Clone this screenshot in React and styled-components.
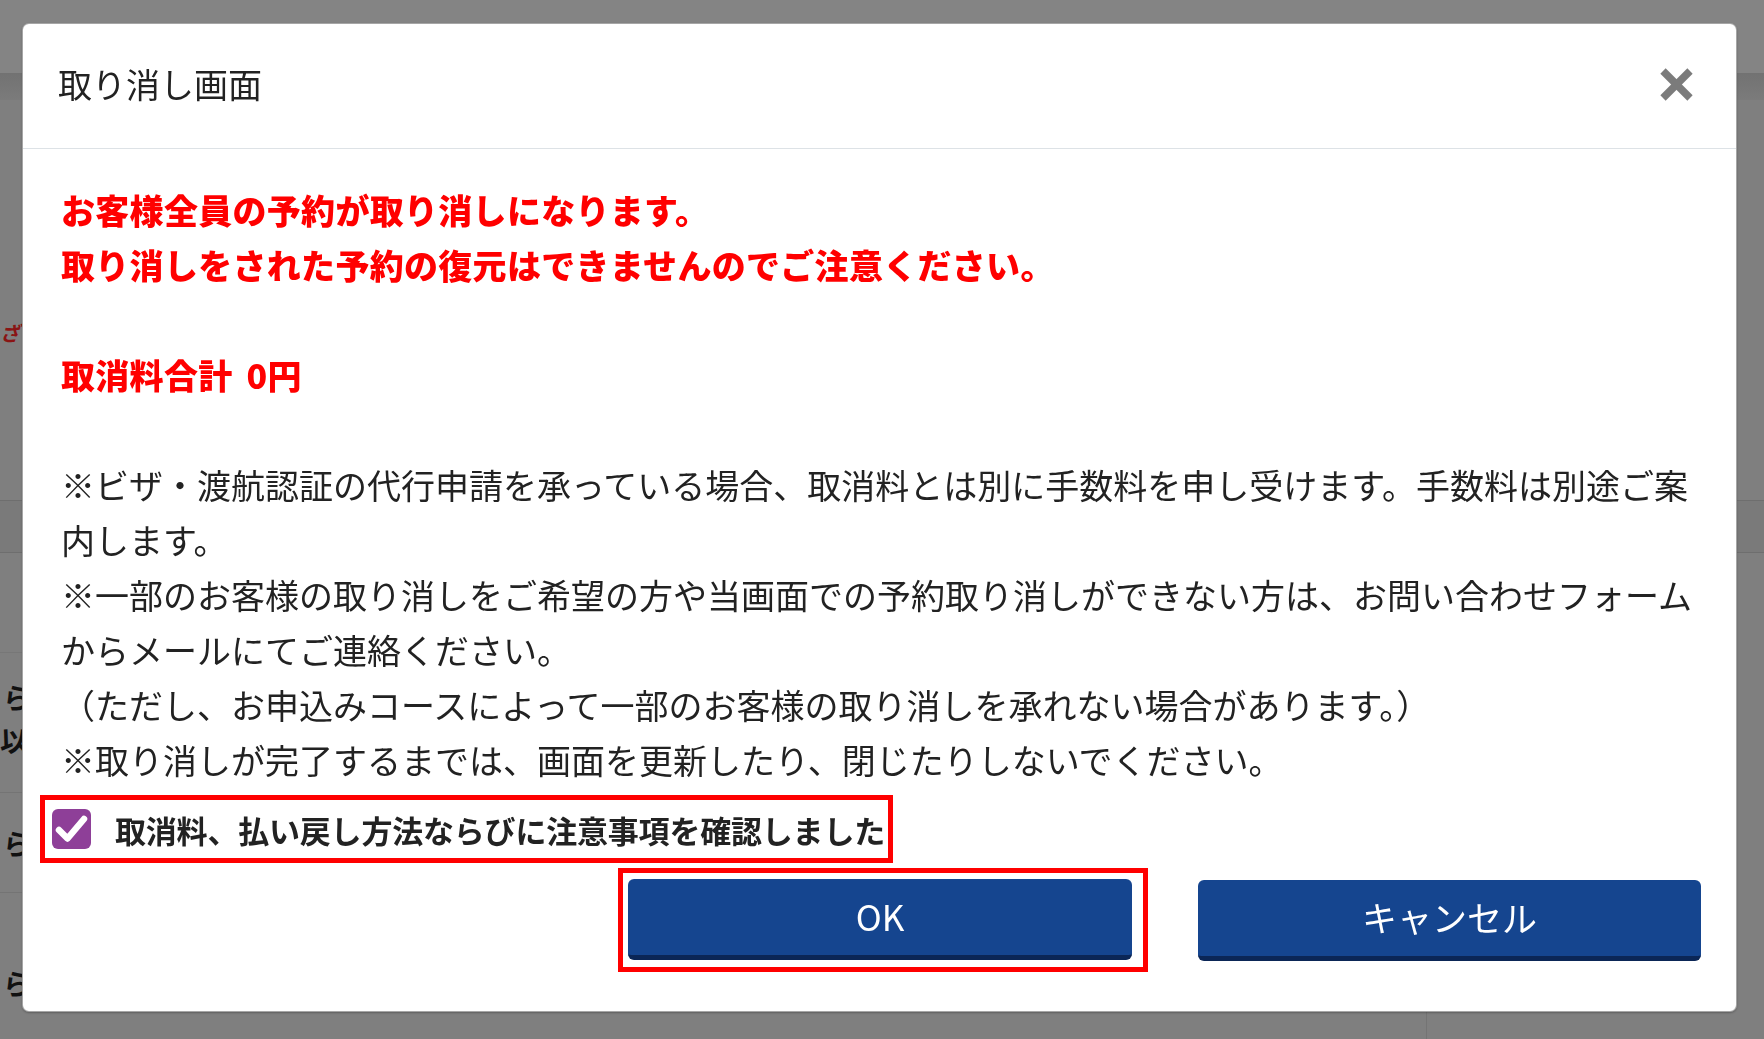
import React, { useState } from "react";
import styled, { createGlobalStyle } from "styled-components";

const FONT = `"Noto Sans CJK JP", "Noto Sans", sans-serif`;

const Global = createGlobalStyle`
  html, body { margin: 0; padding: 0; }
  body {
    background: #7f7f7f;
    font-family: ${FONT};
    overflow: hidden;
  }
  * { box-sizing: border-box; }
`;

/* ---------- dimmed page behind the dialog ---------- */
const Backdrop = styled.div`
  width: 1764px;
  height: 1039px;
  display: flex;
  flex-direction: column;
  background: #7f7f7f;
  overflow: hidden;
`;
const TopBar = styled.div`
  height: 73px;
  background: #848484;
`;
const NavBand = styled.div`
  height: 27px;
  background: linear-gradient(#727272, #7b7b7b);
`;
const Section = styled.div`
  height: ${(p) => p.$h}px;
  padding-top: ${(p) => p.$pt || 0}px;
  background: ${(p) => p.$bg || "transparent"};
  border-bottom: ${(p) => (p.$line ? `1px solid ${p.$line}` : "none")};
  border-top: ${(p) => (p.$topLine ? `1px solid ${p.$topLine}` : "none")};
  display: flex;
  flex-direction: column;
`;
const LowerGrid = styled.div`
  flex: 1;
  display: grid;
  grid-template-columns: 1426px 1fr;
`;
const LowerMain = styled.div`
  display: flex;
  flex-direction: column;
`;
const LowerSide = styled.div`
  border-left: 1px solid #747474;
`;
const Frag = styled.span`
  display: block;
  white-space: nowrap;
  font-size: ${(p) => p.$size}px;
  line-height: ${(p) => p.$lh}px;
  font-weight: 700;
  color: ${(p) => p.$color || "#111"};
  font-style: ${(p) => (p.$italic ? "italic" : "normal")};
  margin-left: ${(p) => p.$ml || 0}px;
`;

/* ---------- dialog ---------- */
const Modal = styled.div`
  position: fixed;
  top: 23px;
  left: 22px;
  width: 1715px;
  background: #fff;
  border: 1px solid rgba(0, 0, 0, 0.35);
  border-radius: 7px;
  box-shadow: 0 1px 2px rgba(0, 0, 0, 0.25);
  font-family: ${FONT};
  color: #222;
`;
const Header = styled.div`
  height: 125px;
  border-bottom: 1px solid #dde2e6;
  display: flex;
  align-items: center;
  justify-content: space-between;
  padding: 0 42px 0 35px;
`;
const Title = styled.h2`
  margin: -5px 0 0 0;
  font-size: 34px;
  font-weight: 400;
  line-height: 1;
  color: #222;
`;
const CloseButton = styled.button`
  width: 35px;
  height: 35px;
  padding: 0;
  border: 0;
  background: transparent;
  cursor: pointer;
  margin-top: -4px;
  display: flex;
  align-items: center;
  justify-content: center;
`;
const Body = styled.div`
  padding: 33px 38px 0 38px;
`;
const Notes = styled.div`
  font-size: 34px;
  line-height: 55px;
`;
const Alert = styled.p`
  margin: 0 0 55px 0;
  color: #ff0000;
  font-weight: 900;
  letter-spacing: 0.3px;
  word-spacing: 6px;
`;
const Plain = styled.p`
  margin: 0;
  color: #222;
  font-weight: 400;
`;
const CheckRow = styled.label`
  margin-top: 8px;
  margin-left: -21px;
  height: 68px;
  display: inline-flex;
  align-items: center;
  gap: 24px;
  padding: 0 3px 0 7px;
  border: 5px solid #ff0000;
  cursor: pointer;
`;
const Box = styled.span`
  width: 39px;
  height: 40px;
  border-radius: 6px;
  background: ${(p) => (p.$on ? "#8e3f98" : "#fff")};
  border: ${(p) => (p.$on ? "none" : "2px solid #999")};
  display: flex;
  align-items: center;
  justify-content: center;
  flex: none;
`;
const CheckLabel = styled.span`
  font-size: 31px;
  letter-spacing: -0.2px;
  font-weight: 700;
  color: #222;
  line-height: 1;
  white-space: nowrap;
`;
const Footer = styled.div`
  margin-top: 5px;
  padding: 0 35px 39px 0;
  display: flex;
  justify-content: flex-end;
  align-items: center;
  gap: 50px;
`;
const Highlight = styled.div`
  border: 5px solid #ff0000;
  padding: 6px 11px 7px 5px;
`;
const ActionButton = styled.button`
  width: ${(p) => p.$w}px;
  height: 81px;
  border: 0;
  border-bottom: 5px solid #0b2656;
  border-radius: 6px;
  background: #15458f;
  color: #fff;
  font-family: ${FONT};
  font-size: 35px;
  font-weight: 400;
  display: flex;
  align-items: center;
  justify-content: center;
  cursor: pointer;
  padding: 0 0 3px 0;
`;

const CloseIcon = () => (
  <svg width="33" height="33" viewBox="0 0 33 33" aria-hidden="true">
    <g stroke="#7b7b7b" strokeWidth="7.5" strokeLinecap="butt">
      <line x1="3" y1="3" x2="30" y2="30" />
      <line x1="30" y1="3" x2="3" y2="30" />
    </g>
  </svg>
);

const CheckIcon = () => (
  <svg width="39" height="40" viewBox="0 0 39 40" aria-hidden="true">
    <polyline
      points="7,21 15.5,29.5 32,10"
      fill="none"
      stroke="#fff"
      strokeWidth="6.5"
      strokeLinecap="round"
      strokeLinejoin="round"
    />
  </svg>
);

export default function App() {
  const [checked, setChecked] = useState(true);
  return (
    <>
      <Global />
      <Backdrop>
        <TopBar />
        <NavBand />
        <Section $h={400} $pt={218}>
          <Frag $size={20} $lh={30} $color="#8a1414" $italic>
            ざいます
          </Frag>
        </Section>
        <Section $h={53} $bg="#7a7a7a" $topLine="#6e6e6e" $line="#6e6e6e" />
        <LowerGrid>
          <LowerMain>
            <Section $h={100} $line="#777777" />
            <Section $h={140} $pt={23} $line="#747474">
              <Frag $size={28} $lh={43} $ml={3}>らす</Frag>
              <Frag $size={28} $lh={43}>以上</Frag>
            </Section>
            <Section $h={100} $pt={29} $line="#747474">
              <Frag $size={28} $lh={43} $ml={3}>らす</Frag>
            </Section>
            <Section $h={146} $pt={69}>
              <Frag $size={28} $lh={43} $ml={3}>らす</Frag>
            </Section>
          </LowerMain>
          <LowerSide />
        </LowerGrid>
      </Backdrop>

      <Modal role="dialog" aria-modal="true">
        <Header>
          <Title>取り消し画面</Title>
          <CloseButton aria-label="閉じる">
            <CloseIcon />
          </CloseButton>
        </Header>
        <Body>
          <Notes>
            <Alert>
              お客様全員の予約が取り消しになります。
              <br />
              取り消しをされた予約の復元はできませんのでご注意ください。
            </Alert>
            <Alert>取消料合計 0円</Alert>
            <Plain>
              ※ビザ・渡航認証の代行申請を承っている場合、取消料とは別に手数料を申し受けます。手数料は別途ご案内します。
              <br />
              ※一部のお客様の取り消しをご希望の方や当画面での予約取り消しができない方は、お問い合わせフォームからメールにてご連絡ください。
              <br />
              （ただし、お申込みコースによって一部のお客様の取り消しを承れない場合があります。）
              <br />
              ※取り消しが完了するまでは、画面を更新したり、閉じたりしないでください。
            </Plain>
          </Notes>
          <CheckRow onClick={() => setChecked((c) => !c)}>
            <Box $on={checked}>{checked && <CheckIcon />}</Box>
            <CheckLabel>取消料、払い戻し方法ならびに注意事項を確認しました</CheckLabel>
          </CheckRow>
        </Body>
        <Footer>
          <Highlight>
            <ActionButton $w={504}>OK</ActionButton>
          </Highlight>
          <ActionButton $w={503}>キャンセル</ActionButton>
        </Footer>
      </Modal>
    </>
  );
}
